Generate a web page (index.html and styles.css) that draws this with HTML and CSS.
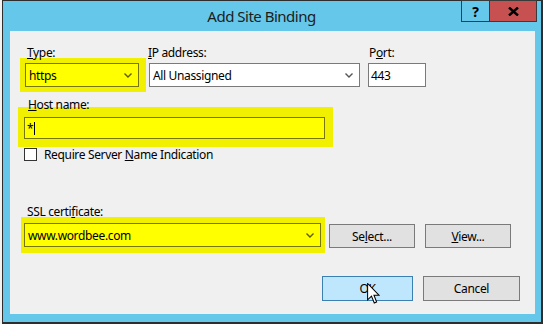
FILE: index.html
```html
<!DOCTYPE html>
<html lang="en">
<head>
    <meta charset="UTF-8">
    <title>Add Site Binding</title>
    <link rel="stylesheet" href="styles.css">
</head>
<body>
    <div class="window">
        <div class="titlebar">
            <div class="title">Add Site Binding</div>
            <div class="caption-buttons">
                <div class="cap-btn help">?</div>
                <div class="cap-btn close">
                    <svg width="11" height="9" viewBox="0 0 11 9"><path d="M1 0.5 L10 8.5 M10 0.5 L1 8.5" stroke="#000" stroke-width="2.4"/></svg>
                </div>
            </div>
        </div>
        <div class="client">
            <div class="top-row">
                <div class="type-field">
                    <div class="lbl"><u>T</u>ype:</div>
                    <div class="mark mark-type">
                        <div class="combo">https
                            <svg class="chev" width="8" height="5" viewBox="0 0 8 5"><path d="M0.5 0.5 L4 4 L7.5 0.5" fill="none" stroke="#5c5c00" stroke-width="1.4"/></svg>
                        </div>
                    </div>
                </div>
                <div class="ip-field">
                    <div class="lbl"><u>I</u>P address:</div>
                    <div class="combo">All Unassigned
                        <svg class="chev" width="8" height="5" viewBox="0 0 8 5"><path d="M0.5 0.5 L4 4 L7.5 0.5" fill="none" stroke="#555" stroke-width="1.4"/></svg>
                    </div>
                </div>
                <div class="port-field">
                    <div class="lbl">P<u>o</u>rt:</div>
                    <div class="textbox">443</div>
                </div>
            </div>

            <div class="host-field">
                <div class="lbl"><u>H</u>ost name:</div>
                <div class="mark mark-host">
                    <div class="textbox">*<span class="caret"></span></div>
                </div>
            </div>

            <div class="check-row">
                <div class="checkbox"></div>
                <span>Require Server <u>N</u>ame Indication</span>
            </div>

            <div class="ssl-field">
                <div class="lbl">SSL certi<u>f</u>icate:</div>
                <div class="ssl-row">
                    <div class="mark mark-ssl">
                        <div class="combo">www.wordbee.com
                            <svg class="chev" width="8" height="5" viewBox="0 0 8 5"><path d="M0.5 0.5 L4 4 L7.5 0.5" fill="none" stroke="#5c5c00" stroke-width="1.4"/></svg>
                        </div>
                    </div>
                    <div class="btn">Se<u>l</u>ect...</div>
                    <div class="btn"><u>V</u>iew...</div>
                </div>
            </div>

            <div class="footer">
                <div class="btn btn-ok">OK</div>
                <div class="btn btn-cancel">Cancel</div>
            </div>

            <svg class="pointer" width="13" height="21" viewBox="0 0 12.5 20.5">
                <path d="M0.5 0.5 L0.5 16.5 L4.3 12.8 L7 19.5 L9.3 18.6 L6.7 12 L11.8 12 Z" fill="#fff" stroke="#000" stroke-width="1"/>
            </svg>
        </div>
    </div>
</body>
</html>
```

FILE: styles.css
```css
body {
    margin: 0;
    background-color: #f3f3f3;
    font-family: "Noto Sans", sans-serif;
    font-size: 12px;
    letter-spacing: -0.35px;
    color: #000;
}
.window {
    margin-left: 2px;
    width: 541px;
    height: 324px;
    box-sizing: border-box;
    background-color: #65c8ea;
    border: 1px solid #2e2e2e;
    border-right-width: 2px;
    border-bottom-width: 2px;
    display: flex;
    flex-direction: column;
}
.titlebar {
    height: 30px;
    display: flex;
    align-items: flex-start;
}
.title {
    flex: 1;
    padding-left: 59px;
    text-align: center;
    line-height: 31px;
    font-size: 15px;
    letter-spacing: -0.5px;
    color: #1c1c1c;
}
.caption-buttons {
    display: flex;
    margin-top: -1px;
    margin-right: 4px;
}
.cap-btn {
    height: 22px;
    box-sizing: border-box;
    border: 1px solid #3a3a3a;
    display: flex;
    align-items: center;
    justify-content: center;
}
.help {
    width: 28px;
    border-right: none;
    font-weight: bold;
    font-size: 14px;
}
.close {
    width: 48px;
    background-color: #c75050;
}
.client {
    flex: 1;
    position: relative;
    margin: 0 6px 8px 7px;
    background-color: #f0f0f0;
}
.lbl {
    position: relative;
    height: 16px;
    line-height: 16px;
}
.mark {
    background-color: #f0f000;
}
.combo, .textbox {
    box-sizing: border-box;
    height: 24px;
    border: 1px solid #7a7a7a;
    background-color: #fff;
    display: flex;
    align-items: center;
}
.combo {
    justify-content: space-between;
    padding: 0 6px 0 3px;
}
.textbox {
    padding-left: 2px;
}
.mark .combo, .mark .textbox {
    background-color: #ffff00;
    border-color: #767600;
}

/* first row */
.top-row {
    display: flex;
    align-items: flex-start;
    margin-top: 14px;
    padding-left: 10px;
}
.type-field {
    width: 126px;
}
.type-field .lbl {
    padding-left: 7px;
    margin-bottom: -3px;
}
.mark-type {
    padding: 5px 7px 5px 5px;
}
.ip-field {
    margin-left: 2px;
}
.ip-field .combo {
    width: 211px;
    margin-left: 1px;
    margin-top: 2px;
}
.port-field {
    margin-left: 8px;
}
.port-field .lbl {
    padding-left: 1px;
}
.port-field .textbox {
    width: 58px;
    margin-top: 2px;
}

/* host name */
.host-field {
    margin: 5px 0 0 8px;
}
.host-field .lbl {
    padding-left: 10px;
    margin-bottom: -6px;
}
.mark-host {
    display: inline-block;
    padding: 10px 8px 8px 6px;
}
.mark-host .textbox {
    width: 301px;
    height: 22px;
}
.caret {
    display: inline-block;
    width: 1px;
    height: 13px;
    margin-left: 1px;
    background-color: #000;
}
.check-row {
    display: flex;
    align-items: center;
    gap: 7px;
    height: 13px;
    margin: 1px 0 0 14px;
}
.checkbox {
    width: 13px;
    height: 13px;
    box-sizing: border-box;
    border: 1px solid #333;
    background-color: #fff;
}

/* certificate */
.ssl-field {
    margin-top: 43px;
}
.ssl-field .lbl {
    padding-left: 17px;
}
.ssl-row {
    display: flex;
    align-items: flex-start;
    gap: 10px;
    margin-top: -3px;
    padding-left: 11px;
}
.mark-ssl {
    padding: 6px 4px 6px 3px;
    margin-right: -6px;
}
.mark-ssl .combo {
    width: 297px;
}
.btn {
    width: 86px;
    height: 24px;
    box-sizing: border-box;
    border: 1px solid #7a7a7a;
    background-color: #e1e1e1;
    display: flex;
    align-items: center;
    justify-content: center;
}
.ssl-row .btn {
    margin-top: 7px;
}
.footer {
    display: flex;
    justify-content: flex-end;
    gap: 10px;
    margin-top: 23px;
    padding-right: 15px;
}
.footer .btn {
    height: 25px;
}
.btn-ok {
    width: 91px;
    background-color: #bee6fd;
    border-color: #3c7fb1;
}
.btn-cancel {
    width: 97px;
}
.pointer {
    position: absolute;
    left: 357px;
    top: 252px;
}
```
